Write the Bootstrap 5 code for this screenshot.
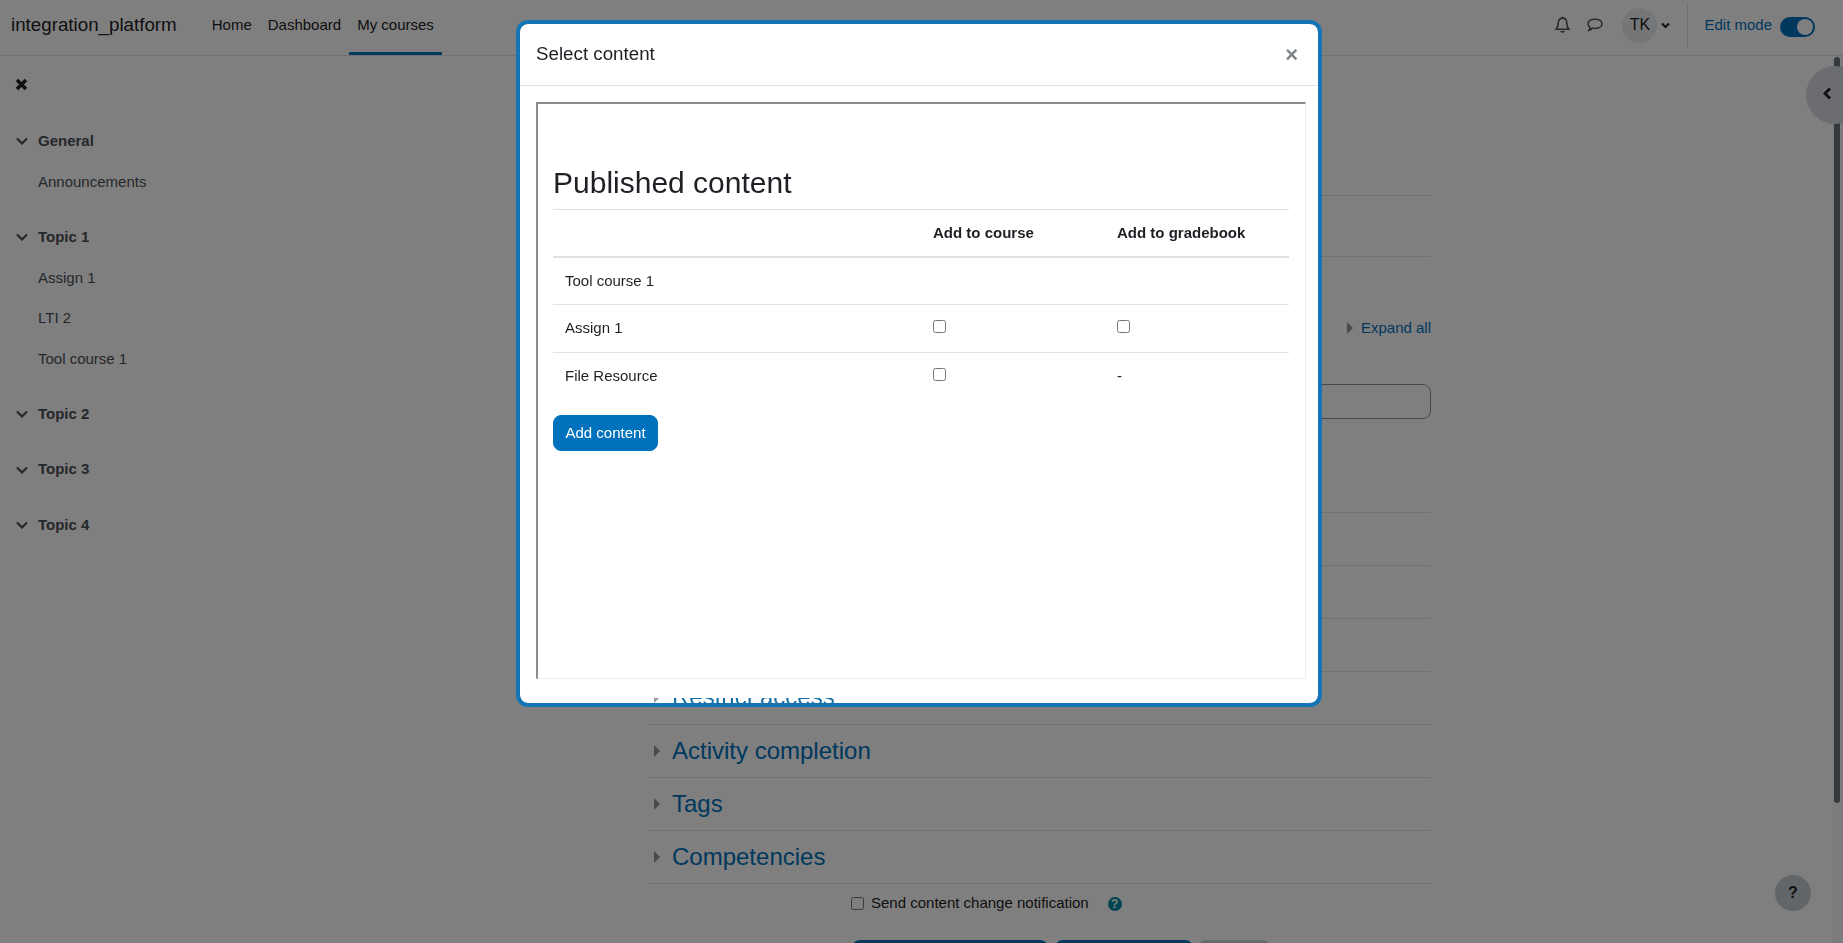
<!DOCTYPE html>
<html lang="en">
<head>
<meta charset="utf-8">
<title>Select content</title>
<link rel="stylesheet" href="https://cdn.jsdelivr.net/npm/bootstrap@5.3.0/dist/css/bootstrap.min.css">
<style>
html,body{height:943px;overflow:hidden}
body{font-family:"Liberation Sans",Arial,sans-serif;font-size:15px;color:#1d2125;background:#fff}
.pg-nav{height:56px;border-bottom:1px solid #dee2e6;background:#fff;padding-left:11px;padding-right:28px}
.pg-brand{font-size:18.75px;color:#1d2125;margin-right:27px;line-height:1;padding-bottom:5px}
.pg-link{color:#1d2125;height:55px;padding:0 8px 5px;display:flex;align-items:center;text-decoration:none}
.pg-link-on{border-bottom:3px solid #0071bc;padding-bottom:2px}
.pg-tools{padding-bottom:5px}
.pg-bell{margin-right:15px}
.pg-avatar{width:35px;height:35px;border-radius:50%;background:#e9ecef;color:#1d2125;font-size:16px;margin-left:18.5px;margin-right:4px}
.pg-sep{width:1px;height:45px;background:#dee2e6;margin:0 16px 0 17px}
.pg-edit{color:#0071bc;margin-right:8px}
.pg-toggle{width:35px;height:20px;background:#0071bc;border-radius:10px;padding:2px;justify-content:flex-end;margin-top:3px}
.pg-knob{width:16px;height:16px;border-radius:50%;background:#fff;display:block}
.pg-side{width:280px;flex:none;padding:22px 16px 0 15px;color:#495057}
.pg-close{display:block;margin-bottom:29.5px}
.pg-group{margin-bottom:14.5px}
.pg-secthead{font-weight:700;display:flex;align-items:center;height:41px;padding-left:1px}
.pg-chev{width:22px;flex:none;display:flex}
.pg-item{padding-left:23px;height:40.5px;display:flex;align-items:center}
.pg-main{width:783px;margin-left:368px;flex:none}
.pg-top1{height:140px;border-bottom:1px solid #dee2e6}
.pg-top2{height:61px;border-bottom:1px solid #dee2e6}
.pg-expand{height:24px;margin-top:59px;color:#0071bc;gap:8px}
.pg-input{height:35px;border:1px solid #8f959e;border-radius:8px;background:#fff;margin-top:44px}
.pg-acc{height:53px;border-bottom:1px solid #dee2e6;color:#0071bc;font-size:24px;display:flex;align-items:center;gap:12px;padding-left:6px}
.pg-acc-first{height:94px;padding-top:41px}
.pg-notify{height:39px;margin-left:203px;color:#1d2125}
.pg-notify-box{width:13px;height:13px;margin:0 7px 0 0}
.pg-info{width:14px;height:14px;border-radius:50%;background:#008ba3;color:#fff;font-size:12px;font-weight:700;margin-left:19px;line-height:1}
.pg-btns{margin-left:204px;margin-top:17px}
.pg-btn1,.pg-btn2,.pg-btn3{height:36px;border-radius:8px;display:block}
.pg-btn1{width:196px;background:#0071bc;margin-right:7px}
.pg-btn2{width:138px;background:#0071bc;margin-right:5px}
.pg-btn3{width:72px;background:#ced4da}
.pg-track{position:fixed;right:0;top:56px;bottom:0;width:11px;background:#f8f9fa}
.pg-bar{position:fixed;right:3px;top:57px;width:6px;height:746px;border-radius:3px;background:#6a737b}
.pg-drawer{position:fixed;left:1806px;top:66px;width:58px;height:58px;border-radius:50%;background:#d6dae0;padding-left:16px;padding-bottom:4px}
.pg-help{position:fixed;left:1775px;top:875px;width:36px;height:36px;border-radius:50%;background:#c7cdd3;color:#1d2125;font-weight:700;font-size:16px}
.sel-dialog{width:806px;max-width:806px;margin:20px 0 0 516px}
.sel-content{height:687px;border:4px solid rgba(0,115,190,.85);border-radius:12px;background-color:#fff;overflow:hidden}
.sel-head{height:62px;padding:0 20px 0 16px;border-bottom:1px solid #dee2e6;flex:none}
.sel-title{font-size:18.75px;color:#1d2125;margin:0;font-weight:400}
.sel-x{font-size:22px;font-weight:700;color:#7f8489;line-height:1}
.sel-body{padding:16px}
.sel-frame{height:577px;width:770px;border-style:solid;border-width:2px 1px 1px 2px;border-color:#8c8c8c #eeeeee #eeeeee #8c8c8c;padding:0 16px 0 15px}
.sel-h{font-size:30px;font-weight:400;line-height:1.2;color:#1d2125;margin:61px 0 8px}
.sel-table{margin-bottom:16px;color:#1d2125;table-layout:fixed}
.sel-table th,.sel-table td{padding:12px;vertical-align:top}
.sel-table thead th{padding-bottom:11px;border-top:1px solid #dee2e6;border-bottom:2px solid #dee2e6}
.sel-table td{border-color:#dee2e6}
.sel-c1{width:368px}
.sel-c2{width:184px}
.sel-check{width:13px;height:13px;margin:3px 0 0;display:block}
.sel-add{background:#0071bc;border-color:#0071bc;color:#fff;font-size:15px;border-radius:8px;padding:0 11.5px;height:36px}
.sel-peek{position:absolute;left:648px;top:698px;width:300px;height:9px;overflow:hidden;color:#1a6ea8;font-size:24px}
.sel-peek-in{height:53px;margin-top:-27.5px;gap:12px;padding-left:6px}
</style>
</head>
<body>
<nav class="pg-nav d-flex align-items-center">
  <span class="pg-brand">integration_platform</span>
  <a class="pg-link" href="#">Home</a>
  <a class="pg-link" href="#">Dashboard</a>
  <a class="pg-link pg-link-on" href="#">My courses</a>
  <div class="ms-auto d-flex align-items-center pg-tools">
    <svg class="pg-bell" width="17" height="18" viewBox="0 0 16 17" fill="none" stroke="#495057" stroke-width="1.5"><path d="M8 2C5.400 2 4 4 4 6.500c0 3-.6 4.500-2 6h12c-1.400-1.500-2-3-2-6C12 4 10.600 2 8 2z"/><path d="M8 .7V2M6.500 14c.3 1.300 2.700 1.300 3 0"/></svg>
    <svg width="18" height="15" viewBox="0 0 17 15" fill="none" stroke="#495057" stroke-width="1.5"><path d="M8.500 1.200c4 0 7 1.800 7 4.600s-3 4.600-7 4.600c-.9 0-1.700-.1-2.400-.3-1 1.200-2.300 2-3.600 2.200.7-.9 1-1.900 1-3C2.400 8.300 1.500 7.200 1.500 5.800c0-2.800 3-4.600 7-4.600z"/></svg>
    <span class="pg-avatar d-flex align-items-center justify-content-center">TK</span>
    <svg width="9" height="7" viewBox="0 0 9 7" fill="none" stroke="#1d2125" stroke-width="2"><path d="M1 1.500l3.500 3.500L8 1.500"/></svg>
    <span class="pg-sep"></span>
    <span class="pg-edit">Edit mode</span>
    <span class="pg-toggle d-flex"><span class="pg-knob"></span></span>
  </div>
</nav>
<div class="d-flex">
  <aside class="pg-side">
    <svg class="pg-close" width="13" height="13" viewBox="0 0 13 13" fill="none" stroke="#1d2125" stroke-width="3.600"><path d="M2 2l9 9M11 2l-9 9"/></svg>
    <div class="pg-group">
      <div class="pg-secthead"><span class="pg-chev"><svg width="12" height="8" viewBox="0 0 12 8" fill="none" stroke="#495057" stroke-width="2.200"><path d="M1 1.500l5 5 5-5"/></svg></span>General</div>
      <div class="pg-item">Announcements</div>
    </div>
    <div class="pg-group">
      <div class="pg-secthead"><span class="pg-chev"><svg width="12" height="8" viewBox="0 0 12 8" fill="none" stroke="#495057" stroke-width="2.200"><path d="M1 1.500l5 5 5-5"/></svg></span>Topic 1</div>
      <div class="pg-item">Assign 1</div>
      <div class="pg-item">LTI 2</div>
      <div class="pg-item">Tool course 1</div>
    </div>
    <div class="pg-group">
      <div class="pg-secthead"><span class="pg-chev"><svg width="12" height="8" viewBox="0 0 12 8" fill="none" stroke="#495057" stroke-width="2.200"><path d="M1 1.500l5 5 5-5"/></svg></span>Topic 2</div>
    </div>
    <div class="pg-group">
      <div class="pg-secthead"><span class="pg-chev"><svg width="12" height="8" viewBox="0 0 12 8" fill="none" stroke="#495057" stroke-width="2.200"><path d="M1 1.500l5 5 5-5"/></svg></span>Topic 3</div>
    </div>
    <div class="pg-group">
      <div class="pg-secthead"><span class="pg-chev"><svg width="12" height="8" viewBox="0 0 12 8" fill="none" stroke="#495057" stroke-width="2.200"><path d="M1 1.500l5 5 5-5"/></svg></span>Topic 4</div>
    </div>
  </aside>
  <main class="pg-main">
    <div class="pg-top1"></div>
    <div class="pg-top2"></div>
    <div class="pg-expand d-flex align-items-center justify-content-end">
      <svg width="6" height="12" viewBox="0 0 6 12" fill="#8f959e"><path d="M0 0l6 6-6 6z"/></svg>
      <span>Expand all</span>
    </div>
    <div class="pg-input"></div>
    <div class="pg-acc pg-acc-first"></div>
    <div class="pg-acc"></div>
    <div class="pg-acc"></div>
    <div class="pg-acc"></div>
    <div class="pg-acc"></div>
    <div class="pg-acc"><svg width="6" height="12" viewBox="0 0 6 12" fill="#8f959e"><path d="M0 0l6 6-6 6z"/></svg><span>Activity completion</span></div>
    <div class="pg-acc"><svg width="6" height="12" viewBox="0 0 6 12" fill="#8f959e"><path d="M0 0l6 6-6 6z"/></svg><span>Tags</span></div>
    <div class="pg-acc"><svg width="6" height="12" viewBox="0 0 6 12" fill="#8f959e"><path d="M0 0l6 6-6 6z"/></svg><span>Competencies</span></div>
    <div class="pg-notify d-flex align-items-center">
      <input class="pg-notify-box" type="checkbox">
      <span>Send content change notification</span>
      <span class="pg-info d-flex align-items-center justify-content-center">?</span>
    </div>
    <div class="pg-btns d-flex">
      <span class="pg-btn1"></span><span class="pg-btn2"></span><span class="pg-btn3"></span>
    </div>
  </main>
</div>
<div class="pg-track"></div>
<div class="pg-bar"></div>
<div class="pg-drawer d-flex align-items-center">
  <svg width="10" height="13" viewBox="0 0 10 13" fill="none" stroke="#1d2125" stroke-width="2.800"><path d="M8 1.500L3 6.500l5 5"/></svg>
</div>
<div class="pg-help d-flex align-items-center justify-content-center">?</div>
<div class="modal-backdrop show"></div>
<div class="modal d-block">
  <div class="modal-dialog sel-dialog">
    <div class="modal-content sel-content">
      <div class="modal-header sel-head">
        <h5 class="modal-title sel-title">Select content</h5>
        <span class="sel-x ms-auto">×</span>
      </div>
      <div class="sel-body">
        <div class="sel-frame">
          <h2 class="sel-h">Published content</h2>
          <table class="table sel-table">
            <thead><tr><th class="sel-c1"></th><th class="sel-c2">Add to course</th><th>Add to gradebook</th></tr></thead>
            <tbody>
              <tr><td>Tool course 1</td><td></td><td></td></tr>
              <tr><td>Assign 1</td><td><input class="sel-check" type="checkbox"></td><td><input class="sel-check" type="checkbox"></td></tr>
              <tr><td class="border-0">File Resource</td><td class="border-0"><input class="sel-check" type="checkbox"></td><td class="border-0">-</td></tr>
            </tbody>
          </table>
          <button class="btn btn-primary sel-add" type="button">Add content</button>
        </div>
      </div>
    </div>
  </div>
  <div class="sel-peek">
    <div class="sel-peek-in d-flex align-items-center">
      <svg width="6" height="12" viewBox="0 0 6 12" fill="#8f959e"><path d="M0 0l6 6-6 6z"/></svg>
      <span>Restrict access</span>
    </div>
  </div>
</div>
</body>
</html>
